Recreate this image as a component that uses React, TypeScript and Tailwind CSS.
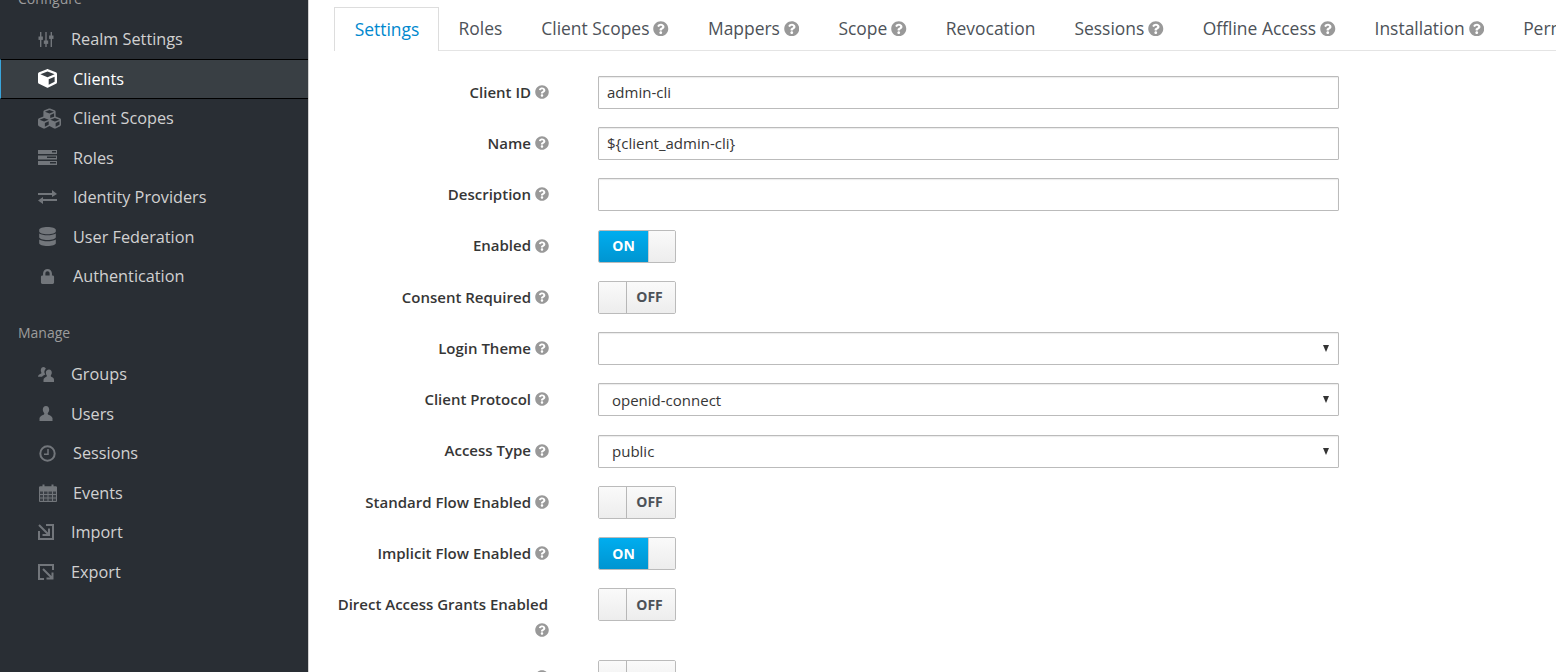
import React from "react";
import { FaCube, FaCubes, FaDatabase, FaLock, FaQuestionCircle } from "react-icons/fa";

const Sliders = () => (
    <svg viewBox="0 0 16 16" className="h-[17px] w-[16px]" fill="#72767b">
        <rect x="2" y="0.5" width="1.4" height="15" />
        <rect x="7.3" y="0.5" width="1.4" height="15" />
        <rect x="12.6" y="0.5" width="1.4" height="15" />
        <rect x="0.5" y="5" width="4.4" height="3.4" />
        <rect x="5.8" y="9" width="4.4" height="3.4" />
        <rect x="11.1" y="4" width="4.4" height="3.4" />
    </svg>
);

const Server = () => (
    <svg viewBox="0 0 19 15" className="h-[15px] w-[19px]" fill="#72767b">
        <path d="M0 0h19v4H0zM0 5.500h19v4H0zM0 11h19v4H0z" />
        <path d="M14 1h4v1.500h-4zM9 6.500h9V8H9zM12 12h6v1.500h-6z" fill="#292e34" />
    </svg>
);

const Exchange = () => (
    <svg viewBox="0 0 19 14" className="h-[14px] w-[19px]" fill="#72767b">
        <path d="M0 3h14V0l5 4-5 3V5H0zM19 9H5V7l-5 3.500L5 14v-3h14z" />
    </svg>
);

const Groups = () => (
    <svg viewBox="0 0 16 15" className="h-[15px] w-[16px]" fill="#72767b">
        <path d="M5.500 0a2.600 2.600 0 0 1 2.400 1.700C6.800 2.600 6.200 4 6.400 5.500c.1.800.6 1.500 1 2-1.500.5-2.700 1.200-3.300 2.300H0c0-1.700 1.700-2.600 3.200-3.200.4-.8.200-1.200-.2-1.900C2.500 3 3 0 5.500 0z" />
        <path d="M11 2.500c1.800 0 2.900 1.500 2.800 3.200 0 1-.5 2-1 2.700-.2.600 0 1 .5 1.300 1.200.5 2.700 1.200 2.700 3v2.300H5.500V13c0-1.800 1.600-2.600 2.900-3.300.4-.3.600-.7.400-1.300-.6-.8-1-1.700-1-2.700-.1-1.700 1.400-3.200 3.200-3.200z" />
    </svg>
);

const UserIcon = () => (
    <svg viewBox="0 0 16 15" className="h-[15px] w-[16px]" fill="#72767b">
        <path d="M8 0c2 0 3.200 1.600 3.200 3.600 0 1.400-.6 2.700-1.400 3.600-.3.600 0 1.200.6 1.500 1.800.8 3.600 1.500 4.100 3.300v3H1.500v-3c.5-1.800 2.300-2.500 4.100-3.300.6-.3.9-.9.6-1.500C5.400 6.300 4.800 5 4.800 3.600 4.800 1.600 6 0 8 0z" />
    </svg>
);

const Clock = () => (
    <svg viewBox="0 0 17 17" className="ml-[1px] h-[17px] w-[17px]" fill="none" stroke="#72767b">
        <circle cx="8.500" cy="8.500" r="7.200" strokeWidth="2" />
        <path d="M9 4v5.200H5" strokeWidth="1.500" />
    </svg>
);

const Calendar = () => (
    <svg viewBox="0 0 18 18" className="ml-[1px] h-[18px] w-[18px]" fill="none" stroke="#72767b" strokeWidth="1">
        <path d="M.5 3h17v14.500H.5z" fill="#72767b" fillOpacity="0.25" />
        <path d="M.5 3h17v4H.5z" fill="#72767b" />
        <path d="M4.500 7v10.500M9 7v10.500M13.500 7v10.500M.5 10.500h17M.5 14h17" />
        <path d="M4.500 0.500v4M13.500 0.500v4" strokeWidth="2" />
    </svg>
);

const ImportIcon = () => (
    <svg viewBox="0 0 16 16" className="h-[16px] w-[16px]" fill="none" stroke="#72767b">
        <path d="M1 7v8h14V1H8" strokeWidth="2" />
        <path d="M1 1l9.500 9.500M4.500 11h6.500V4.500" strokeWidth="2" />
    </svg>
);

const ExportIcon = () => (
    <svg viewBox="0 0 16 16" className="h-[16px] w-[16px]" fill="none" stroke="#72767b">
        <path d="M6 15H1V1h14v5" strokeWidth="2" />
        <path d="M5 5l9.500 9.500M8.500 14.500h6V8.500" strokeWidth="2" />
    </svg>
);

const IconSlot = ({ children }: { children: React.ReactNode }) => (
    <span className="flex w-[19px] shrink-0 items-center justify-start">{children}</span>
);

const NavItem = ({ icon, label, gap, active }: { icon: React.ReactNode; label: string; gap: string; active?: boolean }) => (
    <li
        className={
            active
                ? "flex h-[39.5px] items-center border-y border-l border-y-black border-l-[#39a5dc] bg-[#393f44] pl-[37px] text-white"
                : "flex h-[39.5px] items-center pl-[38px] text-[#d1d1d1]"
        }
    >
        <IconSlot>{icon}</IconSlot>
        <span className={gap}>{label}</span>
    </li>
);

const Help = ({ size = "text-[14px]" }: { size?: string }) => (
    <FaQuestionCircle className={`${size} shrink-0 text-[#999999]`} />
);

const Tab = ({ label, help }: { label: string; help?: boolean }) => (
    <div className="flex h-[43px] shrink-0 items-center gap-[4px] px-[19.500px] whitespace-nowrap text-[#4d5258]">
        <span>{label}</span>
        {help && <Help size="text-[15.500px]" />}
    </div>
);

const Row = ({ label, children }: { label: string; children: React.ReactNode }) => (
    <div className="mb-[18.250px] flex h-[33px] items-center">
        <div className="flex w-[215px] items-center justify-end gap-[4px] pb-[1px] text-[15px] font-semibold whitespace-nowrap text-[#363636]">
            <span>{label}</span>
            <Help />
        </div>
        <div className="ml-[49px]">{children}</div>
    </div>
);

const TextInput = ({ value }: { value?: string }) => (
    <div className="flex h-[33px] w-[741px] items-center rounded-[1px] border border-[#bbbbbb] bg-white pl-[8px] text-[15px] text-[#363636] shadow-[inset_0_1px_1px_rgba(3,3,3,0.08)]">
        {value}
    </div>
);

const Select = ({ value }: { value?: string }) => (
    <div className="flex h-[33px] w-[741px] items-center justify-between rounded-[1px] border border-[#bbbbbb] bg-white pr-[9px] pl-[13px] text-[15px] text-[#363636] shadow-[inset_0_1px_1px_rgba(3,3,3,0.08)]">
        <span>{value}</span>
        <span className="h-0 w-0 border-x-[3.500px] border-t-[7px] border-x-transparent border-t-[#333333]" />
    </div>
);

const Toggle = ({ on }: { on?: boolean }) =>
    on ? (
        <div className="flex h-[33px] w-[78px] overflow-hidden rounded-[2px] border border-[#bbbbbb] text-[14px] font-bold">
            <div className="flex w-[49px] items-center justify-center bg-gradient-to-b from-[#00adef] to-[#0095d1] pb-[1px] text-white">ON</div>
            <div className="flex-1 border-l border-[#cccccc] bg-gradient-to-b from-[#fafafa] to-[#ededed]" />
        </div>
    ) : (
        <div className="flex h-[33px] w-[78px] overflow-hidden rounded-[2px] border border-[#bbbbbb] text-[14px] font-bold text-[#4d5258]">
            <div className="w-[28px] border-r border-[#b7b7b7] bg-gradient-to-b from-[#fafafa] to-[#ededed]" />
            <div className="flex flex-1 items-center justify-center bg-gradient-to-b from-[#fafafa] to-[#ededed] pr-[3px] pb-[1px]">OFF</div>
        </div>
    );

export default function App() {
    return (
        <div className="flex h-screen overflow-hidden bg-white font-['Open_Sans',sans-serif]">
            {/* Sidebar */}
            <aside className="h-full w-[309px] shrink-0 border-r border-[#d1d1d1] bg-[#292e34] text-[16.250px]">
                <div className="-mt-[8px] flex h-[27.500px] items-start pl-[18px] text-[14px] leading-[14px] text-[#9c9c9c]">Configure</div>
                <ul>
                    <NavItem icon={<Sliders />} label="Realm Settings" gap="ml-[14px]" />
                    <NavItem active icon={<FaCube className="shrink-0 text-[19px] text-white" />} label="Clients" gap="ml-[16px]" />
                    <NavItem icon={<FaCubes className="shrink-0 text-[23px] text-[#72767b]" />} label="Client Scopes" gap="ml-[16px]" />
                    <NavItem icon={<Server />} label="Roles" gap="ml-[16px]" />
                    <NavItem icon={<Exchange />} label="Identity Providers" gap="ml-[16px]" />
                    <NavItem icon={<FaDatabase className="shrink-0 text-[19px] text-[#72767b]" />} label="User Federation" gap="ml-[16px]" />
                    <NavItem icon={<FaLock className="ml-[2px] shrink-0 text-[15px] text-[#72767b]" />} label="Authentication" gap="ml-[16px]" />
                </ul>
                <div className="mt-[27px] pl-[18px] text-[14px] leading-[20px] text-[#9c9c9c]">Manage</div>
                <ul className="mt-[11.600px]">
                    <NavItem icon={<Groups />} label="Groups" gap="ml-[14px]" />
                    <NavItem icon={<UserIcon />} label="Users" gap="ml-[14px]" />
                    <NavItem icon={<Clock />} label="Sessions" gap="ml-[16px]" />
                    <NavItem icon={<Calendar />} label="Events" gap="ml-[16px]" />
                    <NavItem icon={<ImportIcon />} label="Import" gap="ml-[14px]" />
                    <NavItem icon={<ExportIcon />} label="Export" gap="ml-[14px]" />
                </ul>
            </aside>

            {/* Main */}
            <main className="min-w-0 flex-1 overflow-hidden">
                <div className="mt-[7px] ml-[25px] flex h-[44px] items-end border-b border-[#e4e4e4] text-[17.450px]">
                    <div className="-mb-px flex h-[44px] w-[105px] shrink-0 items-center justify-center border border-b-0 border-[#dddddd] bg-white pl-[1px] text-[#0088ce]">Settings</div>
                    <Tab label="Roles" />
                    <Tab label="Client Scopes" help />
                    <Tab label="Mappers" help />
                    <Tab label="Scope" help />
                    <Tab label="Revocation" />
                    <Tab label="Sessions" help />
                    <Tab label="Offline Access" help />
                    <Tab label="Installation" help />
                    <Tab label="Permissions" />
                </div>

                <form className="mt-[24.900px] ml-[25px]">
                    <Row label="Client ID"><TextInput value="admin-cli" /></Row>
                    <Row label="Name"><TextInput value="${client_admin-cli}" /></Row>
                    <Row label="Description"><TextInput /></Row>
                    <Row label="Enabled"><Toggle on /></Row>
                    <Row label="Consent Required"><Toggle /></Row>
                    <Row label="Login Theme"><Select /></Row>
                    <Row label="Client Protocol"><Select value="openid-connect" /></Row>
                    <Row label="Access Type"><Select value="public" /></Row>
                    <Row label="Standard Flow Enabled"><Toggle /></Row>
                    <Row label="Implicit Flow Enabled"><Toggle on /></Row>

                    <div className="mb-[18.250px] flex h-[53.500px] items-start">
                        <div className="flex w-[215px] flex-col items-end text-[15px] font-semibold whitespace-nowrap text-[#363636]">
                            <span className="mt-[6px] pr-[1px] leading-[20px]">Direct Access Grants Enabled</span>
                            <span className="mt-[9px]"><Help /></span>
                        </div>
                        <div className="ml-[49px]"><Toggle /></div>
                    </div>

                    {/* last row is cut off by the window, only the toggle top shows */}
                    <div className="flex h-[33px]">
                        <div className="flex w-[215px] justify-end pt-[10px]"><Help /></div>
                        <div className="ml-[49px]"><Toggle /></div>
                    </div>
                </form>
            </main>
        </div>
    );
}
